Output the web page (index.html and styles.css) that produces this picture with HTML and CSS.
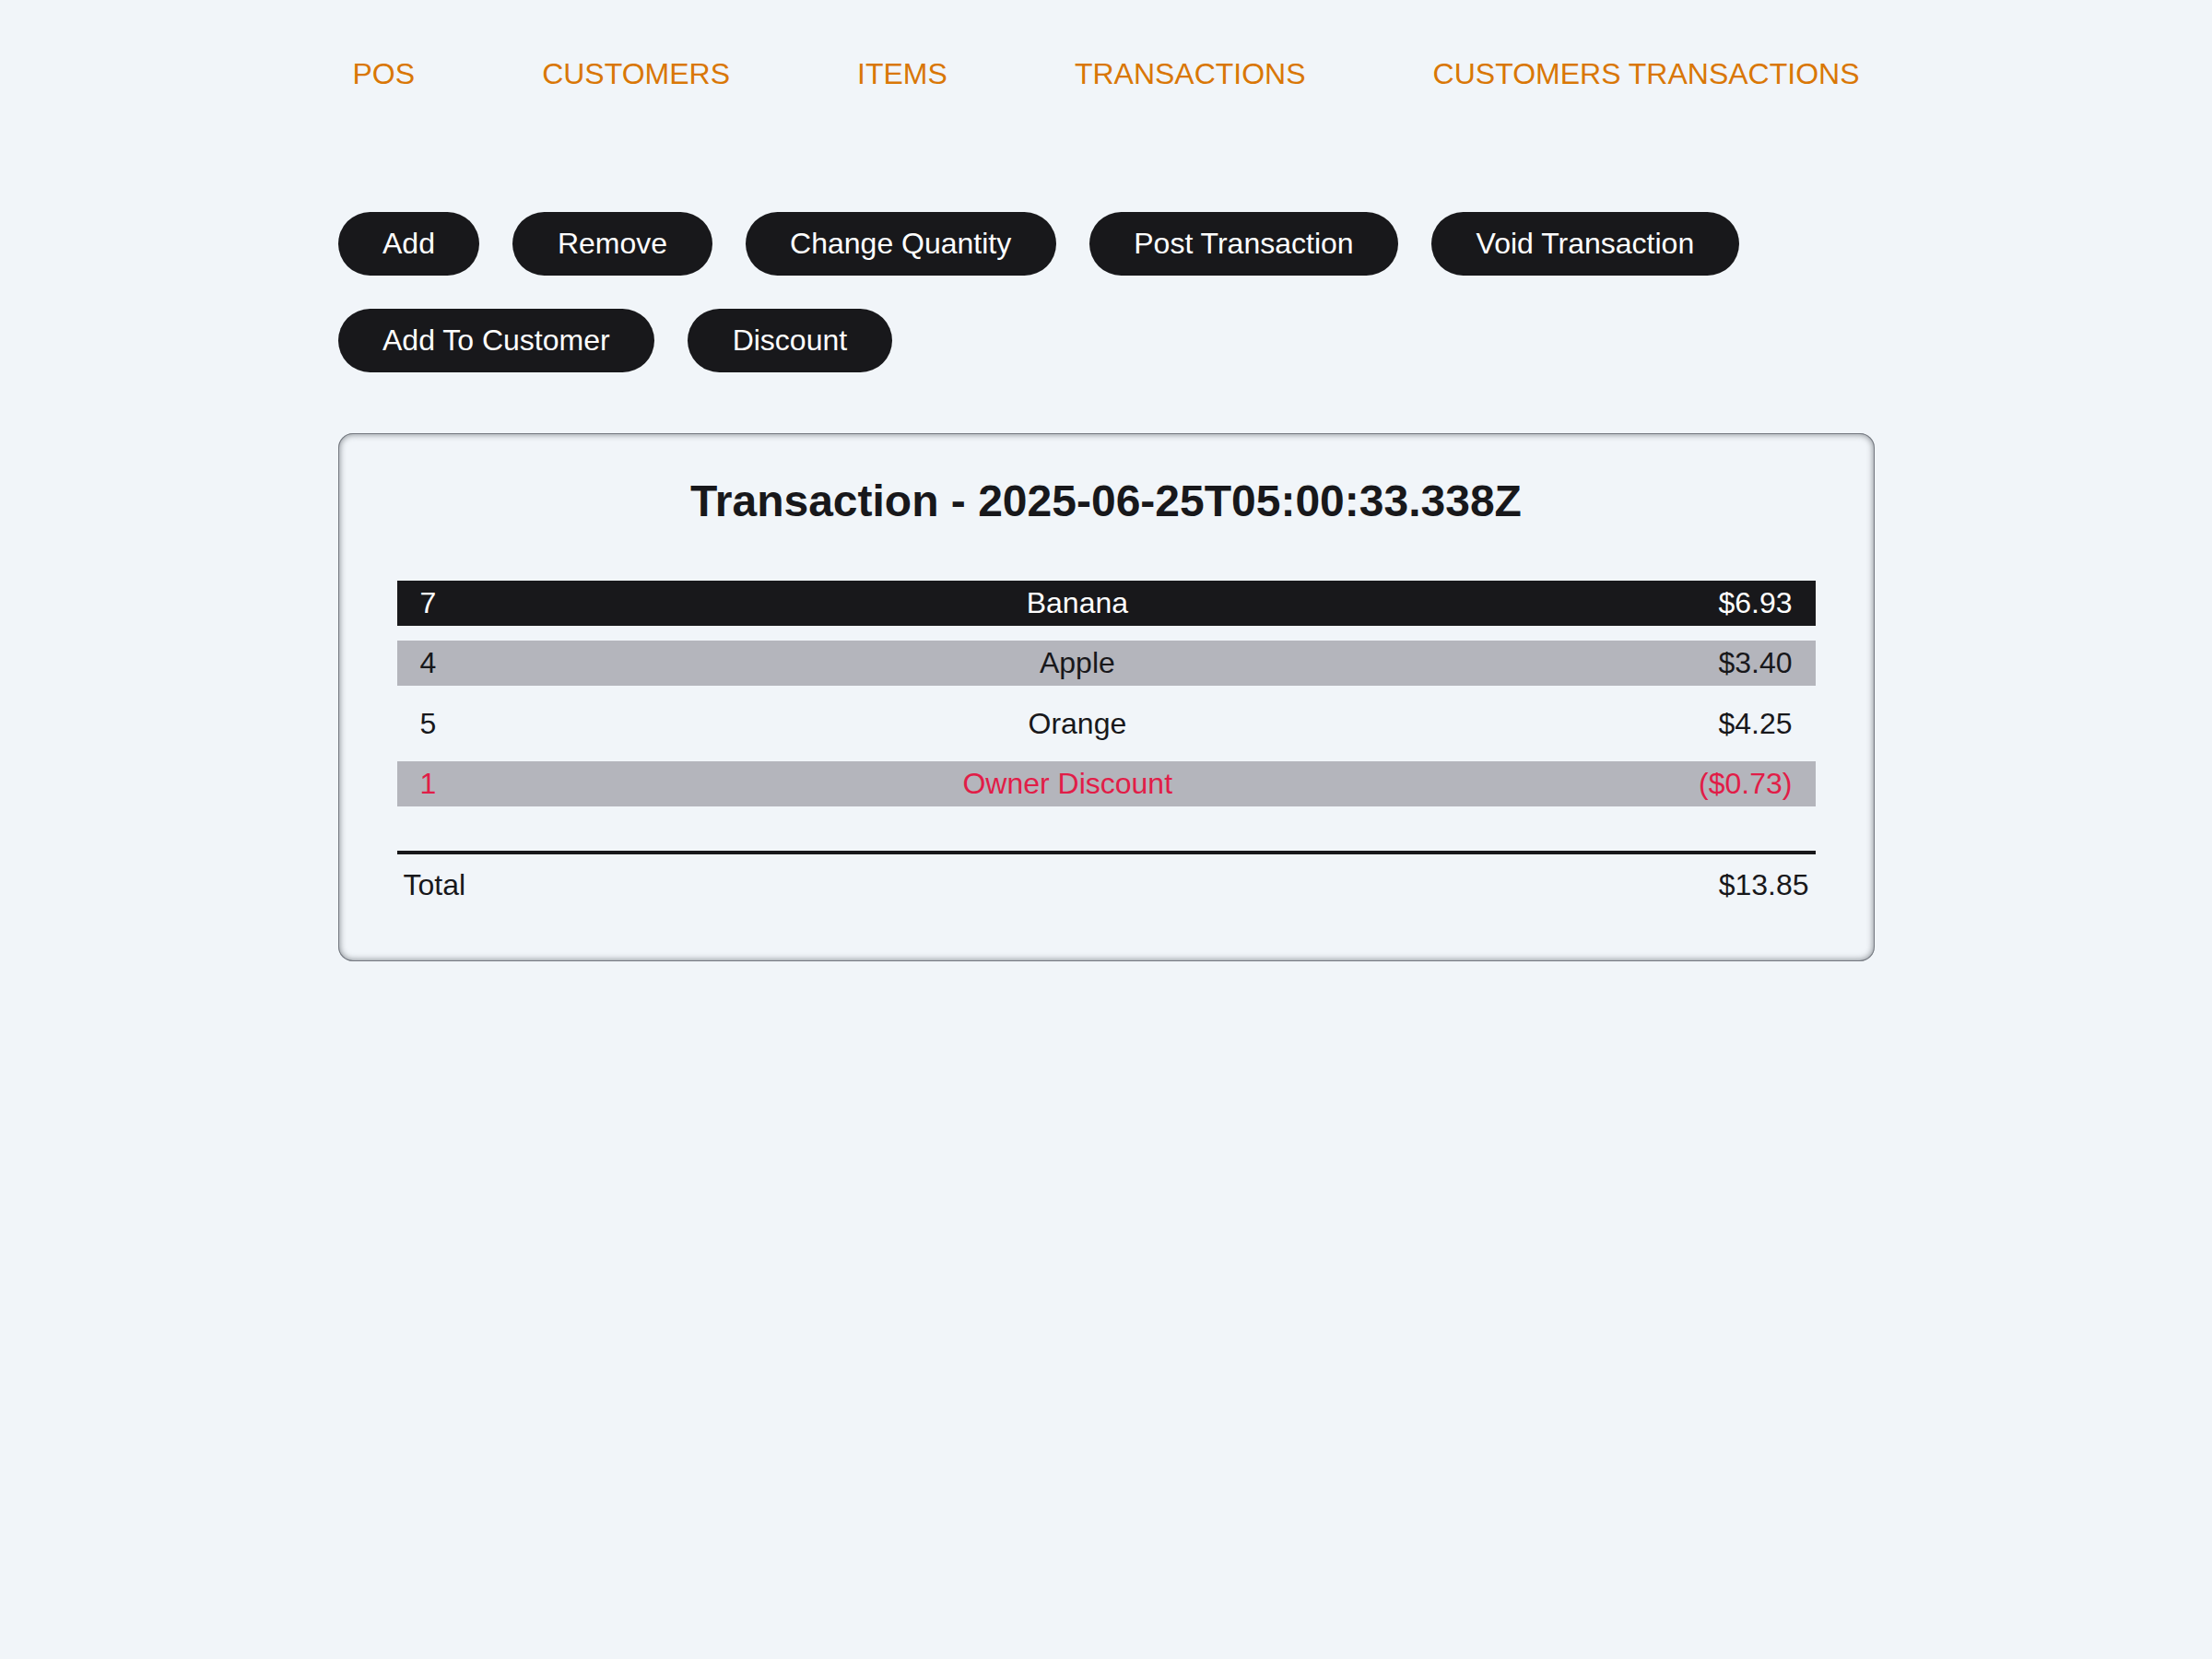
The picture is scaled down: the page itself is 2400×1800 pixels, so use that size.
FILE: index.html
```html
<!DOCTYPE html>
<html lang="en">
<head>
<meta charset="utf-8">
<title>POS</title>
<link rel="stylesheet" href="styles.css">
</head>
<body>
<div class="container">
  <nav class="nav">
    <a class="nav-link" href="#">POS</a>
    <a class="nav-link" href="#">Customers</a>
    <a class="nav-link" href="#">Items</a>
    <a class="nav-link" href="#">Transactions</a>
    <a class="nav-link" href="#">Customers Transactions</a>
  </nav>

  <div class="actions">
    <button class="btn">Add</button>
    <button class="btn">Remove</button>
    <button class="btn">Change Quantity</button>
    <button class="btn">Post Transaction</button>
    <button class="btn">Void Transaction</button>
    <button class="btn">Add To Customer</button>
    <button class="btn">Discount</button>
  </div>

  <section class="card">
    <h2 class="card-title">Transaction - 2025-06-25T05:00:33.338Z</h2>
    <div class="lines">
      <div class="line selected"><span>7</span><span>Banana</span><span>$6.93</span></div>
      <div class="line shaded"><span>4</span><span>Apple</span><span>$3.40</span></div>
      <div class="line"><span>5</span><span>Orange</span><span>$4.25</span></div>
      <div class="line shaded discount"><span>1</span><span>Owner Discount</span><span>($0.73)</span></div>
    </div>
    <div class="rule"></div>
    <div class="total"><span>Total</span><span>$13.85</span></div>
  </section>
</div>
</body>
</html>
```

FILE: styles.css
```css
html, body {
  margin: 0;
  padding: 0;
}

body {
  background: #f1f5f9;
  color: #18181b;
  font-family: "Liberation Sans", Arial, Helvetica, sans-serif;
  font-size: 32px;
}

.container {
  width: 1667px;
  margin: 0 auto;
}

.nav {
  display: flex;
  justify-content: space-between;
  padding-top: 62px;
}

.nav-link {
  padding: 0 16px;
  color: #d97706;
  text-decoration: none;
  text-transform: uppercase;
  font-size: 32px;
}

.actions {
  display: flex;
  flex-wrap: wrap;
  gap: 36px;
  margin-top: 131px;
}

.btn {
  font-family: inherit;
  font-size: 32px;
  line-height: 1.15;
  color: #ffffff;
  background: #18181b;
  border: none;
  border-radius: 9999px;
  padding: 16px 48.5px;
  margin: 0;
  cursor: pointer;
}

.card {
  margin-top: 66px;
  padding: 46px 64px 64px;
  border-radius: 16px;
  box-shadow: inset 0 0 0 1px rgba(110, 114, 122, 0.9), inset 0 0 6px 2px rgba(70, 74, 82, 0.55);
}

.card-title {
  margin: 0 0 59px;
  font-size: 48px;
  font-weight: 700;
  line-height: 1.15;
  text-align: center;
}

.lines {
  display: flex;
  flex-direction: column;
  gap: 16px;
}

.line {
  display: flex;
  justify-content: space-between;
  align-items: center;
  box-sizing: border-box;
  height: 49.3px;
  padding: 6px 25px;
  line-height: 1.15;
}

.line.selected {
  background: #18181b;
  color: #ffffff;
}

.line.shaded {
  background: #b4b5bc;
}

.line.discount {
  color: #e11d48;
}

.rule {
  margin-top: 48.5px;
  height: 4px;
  background: #18181b;
}

.total {
  display: flex;
  justify-content: space-between;
  padding: 15px 7px 0;
  line-height: 1.15;
}
```
